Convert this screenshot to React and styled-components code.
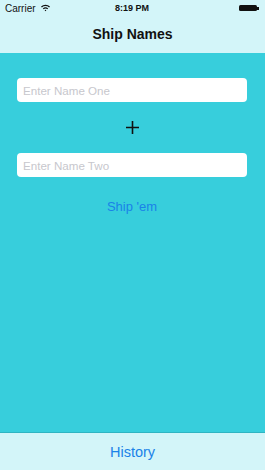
import React from "react";
import styled, { createGlobalStyle } from "styled-components";

const GlobalStyle = createGlobalStyle`
  html, body {
    margin: 0;
    padding: 0;
    height: 100%;
  }
  body {
    font-family: "Liberation Sans", Arial, sans-serif;
    background: #37cedc;
  }
  #root {
    height: 100%;
  }
`;

const App = () => {
  return (
    <Screen>
      <GlobalStyle />
      <TopBar>
        <StatusBar>
          <Carrier>
            Carrier
            <svg width="11" height="8" viewBox="0 0 10 8">
              <path d="M0.5 2.6 A6.5 6.5 0 0 1 9.5 2.6 L8.6 3.5 A5.2 5.2 0 0 0 1.4 3.5 Z" fill="#111" />
              <path d="M2.3 4.4 A4 4 0 0 1 7.7 4.4 L6.8 5.3 A2.7 2.7 0 0 0 3.2 5.3 Z" fill="#111" />
              <path d="M4.1 6.2 A1.3 1.3 0 0 1 5.9 6.2 L5 7.2 Z" fill="#111" />
            </svg>
          </Carrier>
          <Time>8:19 PM</Time>
          <Battery>
            <BatteryBody />
            <BatteryTip />
          </Battery>
        </StatusBar>
        <Title>Ship Names</Title>
      </TopBar>
      <Content>
        <NameInput placeholder="Enter Name One" />
        <Plus>
          <svg width="13" height="13" viewBox="0 0 13 13">
            <path d="M6.5 0 V13 M0 6.5 H13" stroke="#111" strokeWidth="1.6" />
          </svg>
        </Plus>
        <NameInput placeholder="Enter Name Two" />
        <LinkButton>Ship 'em</LinkButton>
      </Content>
      <BottomBar>
        <LinkButton $large>History</LinkButton>
      </BottomBar>
    </Screen>
  );
};

const Screen = styled.div`
  height: 470px;
  display: flex;
  flex-direction: column;
  background: #37cedc;
`;

const TopBar = styled.header`
  height: 53px;
  background: #d3f5f9;
  display: flex;
  flex-direction: column;
`;

const StatusBar = styled.div`
  height: 16px;
  padding: 0 6px 0 5px;
  display: flex;
  align-items: center;
  justify-content: space-between;
  font-size: 10px;
  color: #111;
`;

const Carrier = styled.div`
  width: 60px;
  display: flex;
  align-items: center;
  gap: 4px;
`;

const Time = styled.div`
  font-weight: bold;
  font-size: 9px;
`;

const Battery = styled.div`
  width: 60px;
  display: flex;
  justify-content: flex-end;
  align-items: center;
`;

const BatteryBody = styled.div`
  width: 18px;
  height: 6px;
  border-radius: 1.5px;
  background: #111;
`;

const BatteryTip = styled.div`
  width: 1.5px;
  height: 3px;
  background: #111;
`;

const Title = styled.h1`
  margin: 0;
  flex: 1;
  display: flex;
  align-items: center;
  justify-content: center;
  padding-bottom: 2px;
  font-size: 14px;
  font-weight: bold;
  color: #111;
`;

const Content = styled.main`
  flex: 1;
  display: flex;
  flex-direction: column;
  align-items: center;
  padding: 25px 18px 0 17px;
`;

const NameInput = styled.input`
  box-sizing: border-box;
  width: 100%;
  height: 24px;
  border: none;
  border-radius: 4px;
  background: #fff;
  padding: 0 6px;
  font-family: "Liberation Sans", Arial, sans-serif;
  font-size: 11.6px;
  color: #222;
  outline: none;

  &::placeholder {
    color: #c7c7cd;
  }
`;

const Plus = styled.div`
  height: 51px;
  display: flex;
  align-items: center;
  justify-content: center;
  padding-left: 1px;
`;

const LinkButton = styled.button`
  border: none;
  background: none;
  padding: 0;
  margin-top: ${(p) => (p.$large ? "0" : "22px")};
  font-family: "Liberation Sans", Arial, sans-serif;
  font-size: ${(p) => (p.$large ? "14.5px" : "13px")};
  color: #1a82e8;
  cursor: pointer;
`;

const BottomBar = styled.footer`
  height: 37px;
  background: #d3f5f9;
  border-top: 1px solid #2fb4c2;
  display: flex;
  align-items: center;
  justify-content: center;
`;

export default App;
